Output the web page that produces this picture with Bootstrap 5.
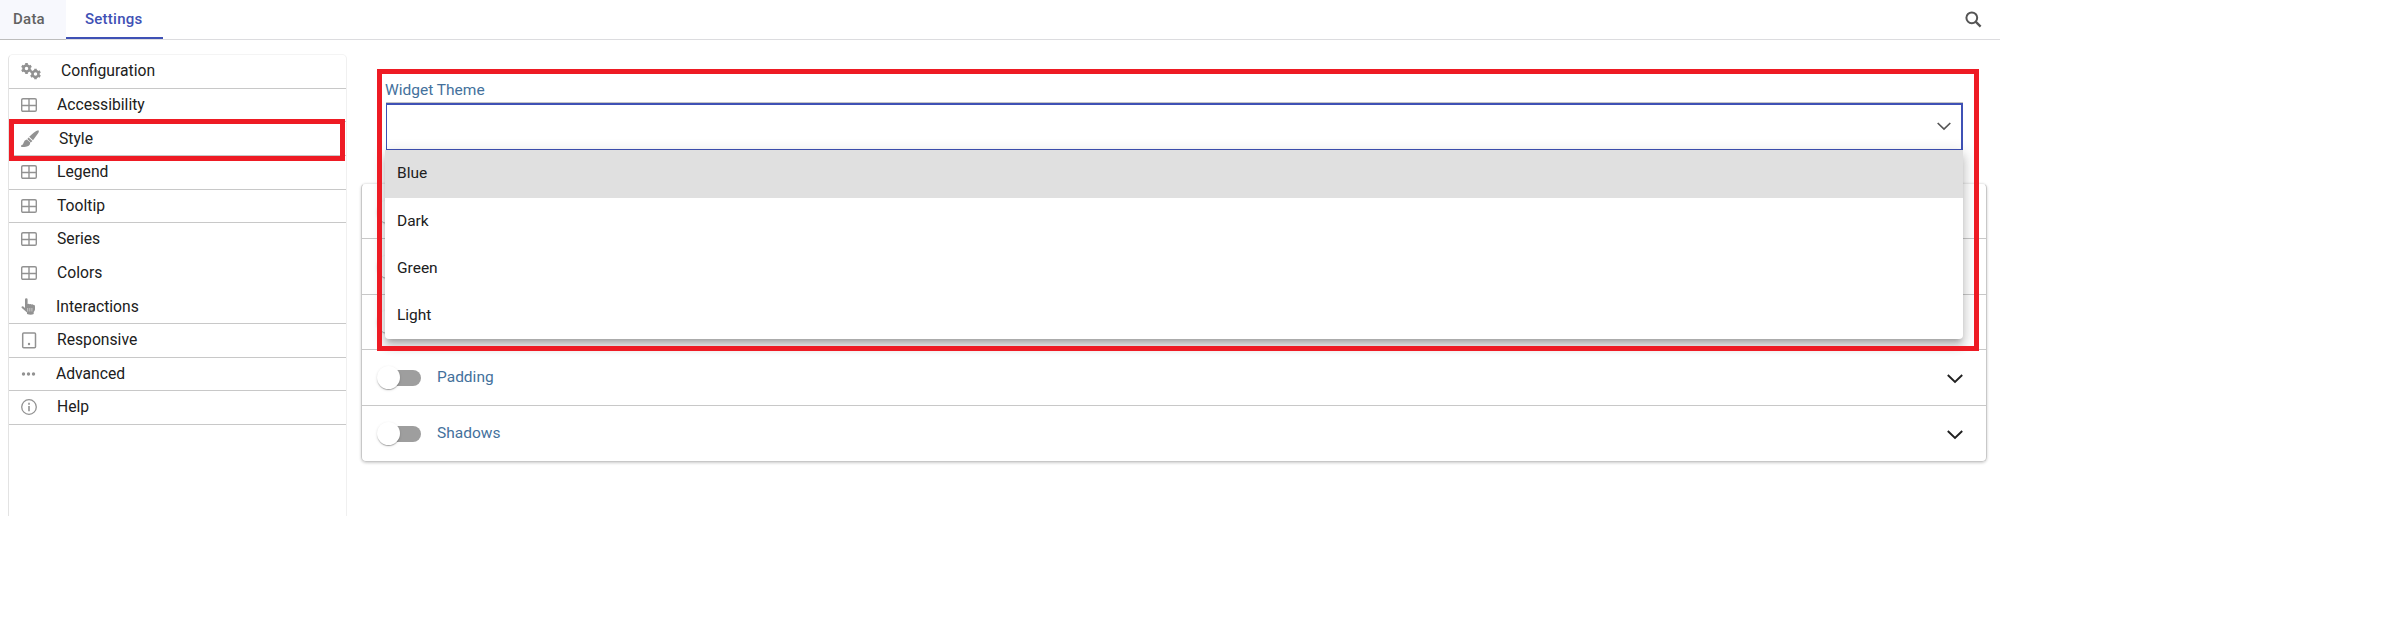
<!DOCTYPE html>
<html lang="en">
<head>
<meta charset="utf-8">
<title>Widget settings</title>
<link href="https://cdn.jsdelivr.net/npm/bootstrap@5.3.0/dist/css/bootstrap.min.css" rel="stylesheet">
<style>
body{font-family:Roboto,sans-serif;font-size:15.5px;line-height:20px;color:#202020;background:#fff}
.app{width:2000px}
.tabbar{height:40px;border-bottom:1px solid #dcdcdf}
.tabbar .tab{height:40px;font-weight:500;font-size:15px;line-height:38px;letter-spacing:.25px}
.tab-data{width:66px;padding-left:13px;background:#f7f8fd;color:#626262;border-bottom:1px solid #bdbdbd}
.tab-set{width:97px;padding-left:19px;color:#3f51b5;border-bottom:1px solid #dcdcdf;box-shadow:inset 0 -2px 0 #3f51b5}
.side{width:339px;height:462px;margin:14.2px 0 0 8px;border-left:1px solid #e3e3e3;border-right:1px solid #f0f0f0;border-top:1px solid #f4f4f4;border-radius:5px 5px 0 0;position:relative}
.side .item{height:33.6px;border-bottom:1px solid #c8c8c8;padding-left:12px;gap:20px;font-size:15.7px}
.side .item.plain{border-bottom-color:transparent}
.side .item svg{flex:none;color:#929292}
.mark-red{position:absolute;border:5px solid #ee1b24;pointer-events:none}
.mark-style{left:0;top:63.8px;width:336px;height:42px}
.mark-theme{left:-9px;top:-11px;width:1602px;height:282px;z-index:3}
.main-col{width:1626px;margin-left:14px}
.field{margin:40px 0 0 25px;width:1577px;position:relative}
.lbl{color:#44719c;line-height:20px}
.field .lbl{margin-left:-1px}
.sel{height:47px;margin-top:3px;border:1px solid #3f51b5;border-top-width:2px;border-right-width:2px;box-shadow:0 -1px 0 #c4c4c4;padding:0 10px 2px 0;color:#555}
.opts{position:absolute;top:70px;left:-1px;width:1578px;height:189px;background:#fff;border-radius:0 0 4px 4px;box-shadow:0 5px 5px -3px rgba(0,0,0,.2),0 8px 10px 1px rgba(0,0,0,.14),0 3px 14px 2px rgba(0,0,0,.12);z-index:2}
.opts div{height:47px;padding-left:12px;line-height:46px}
.opts .on{background:#e0e0e0;height:48px}
.panels{margin-top:33px;border:1px solid #c8c8c8;border-top-color:#ececec;border-radius:5px;box-shadow:0 1px 3px rgba(0,0,0,.2)}
.prow{height:55.4px;border-bottom:1px solid #c8c8c8;padding:0 23px 0 15px;gap:16px}
.prow:last-child{border-bottom:0}
.prow>svg{margin-top:3px}
.sw{width:44px;height:23px;position:relative;flex:none}
.sw::before{content:"";position:absolute;left:5px;right:0;top:4px;height:16px;border-radius:8px;background:#9e9e9e}
.sw::after{content:"";position:absolute;left:0;top:0;width:23px;height:23px;border-radius:50%;background:#fff;box-shadow:0 2px 1px -1px rgba(0,0,0,.2),0 1px 1px rgba(0,0,0,.14),0 1px 3px rgba(0,0,0,.12)}
.find{margin:11px 18px 0 0}
</style>
<script src="https://cdn.jsdelivr.net/npm/bootstrap@5.3.0/dist/js/bootstrap.bundle.min.js"></script>
</head>
<body>
<svg class="d-none">
<symbol id="grid" viewBox="0 0 16 14"><path d="M2 .7h12q1.300 0 1.300 1.300v10q0 1.300-1.300 1.300H2Q.7 13.300.7 12V2Q.7.7 2 .7zM8 .7v12.600M.7 7.500h14.600" fill="none" stroke="currentColor" stroke-width="1.400"/></symbol>
<symbol id="chev" viewBox="0 0 16 10"><path d="M.8 1l7.200 7 7.200-7" fill="none" stroke="currentColor" stroke-width="1.900"/></symbol>
<symbol id="gear" viewBox="-5.500 -5.500 11 11"><circle r="3" fill="none" stroke="currentColor" stroke-width="2.500"/><path d="M0-5.400v2M0 3.400v2M-4.700-2.700l1.700 1M3 1.700l1.700 1M-4.700 2.700l1.700-1M3-1.700l1.700-1" stroke="currentColor" stroke-width="2.600"/></symbol>
</svg>
<div class="app">
<nav class="tabbar d-flex">
<div class="tab tab-data">Data</div><div class="tab tab-set">Settings</div>
<svg class="find ms-auto" width="17" height="17" viewBox="0 0 17 17" fill="none" stroke="#555"><circle cx="6.800" cy="6.800" r="5.400" stroke-width="2"/><path d="M10.600 10.600l5 5" stroke-width="2.300"/></svg>
</nav>
<div class="d-flex align-items-start">
<aside class="side">
<div class="item d-flex align-items-center"><svg width="20" height="17"><use href="#gear" x="0" y="0" width="11" height="11"/><use href="#gear" x="9" y="5.500" width="11" height="11"/></svg><span>Configuration</span></div>
<div class="item d-flex align-items-center"><svg width="16" height="14"><use href="#grid"/></svg><span>Accessibility</span></div>
<div class="item d-flex align-items-center"><svg width="18" height="17" viewBox="0 0 18 17" fill="currentColor"><path d="M17.300.2q1.200 1-.2 3.100L12 10.200l-3.800-3.400Q13.300 1.400 17.300.2zM7.600 7.500l3.800 3.400-1.600 1.500-3.500-3.300z"/><path d="M5.800 9.400l3.500 3.200q-.3 4.300-5.800 4.300H.2v-1.600q2.100-.3 2.500-2.800.6-2.500 3.100-3.100z"/></svg><span>Style</span></div>
<div class="item d-flex align-items-center"><svg width="16" height="14"><use href="#grid"/></svg><span>Legend</span></div>
<div class="item d-flex align-items-center"><svg width="16" height="14"><use href="#grid"/></svg><span>Tooltip</span></div>
<div class="item plain d-flex align-items-center"><svg width="16" height="14"><use href="#grid"/></svg><span>Series</span></div>
<div class="item plain d-flex align-items-center"><svg width="16" height="14"><use href="#grid"/></svg><span>Colors</span></div>
<div class="item d-flex align-items-center"><svg width="15" height="17" viewBox="0 0 15 17"><path fill="currentColor" d="M4 1.500Q4 .3 5.300.3T6.600 1.500V6q1-.7 2 .2 1.100-.7 2 .3 1.100-.5 1.700.4 1.700-.3 1.700 1.500v3q-.4 1.700-1.300 2.500V16Q10 17.300 6 16V14.500L.6 9.800Q.2 8.200 2 8.300l2 1.600z"/><path d="M6.700 10v3.500M8.800 10v3.500M10.900 10v3.500" stroke="#fff" stroke-width=".5"/></svg><span>Interactions</span></div>
<div class="item d-flex align-items-center"><svg width="16" height="17" viewBox="0 0 16 17" fill="none" stroke="currentColor"><rect x="1.700" y="1" width="12.800" height="14.800" rx="1" stroke-width="1.500"/><circle cx="8" cy="12" r="1.200" fill="currentColor" stroke="none"/></svg><span>Responsive</span></div>
<div class="item d-flex align-items-center"><svg width="15" height="6" fill="currentColor"><circle cx="2.500" cy="3" r="1.700"/><circle cx="7.500" cy="3" r="1.700"/><circle cx="12.500" cy="3" r="1.700"/></svg><span>Advanced</span></div>
<div class="item d-flex align-items-center"><svg width="16" height="16" fill="none" stroke="currentColor"><circle cx="8" cy="8" r="7.300" stroke-width="1.300"/><path d="M8 7v5.200M8 3.700v2" stroke-width="1.600"/></svg><span>Help</span></div>
<div class="mark-red mark-style"></div>
</aside>
<main class="main-col">
<div class="field">
<div class="lbl">Widget Theme</div>
<div class="sel d-flex align-items-center justify-content-end" role="combobox"><svg width="14" height="9"><use href="#chev"/></svg></div>
<div class="opts"><div class="on">Blue</div><div>Dark</div><div>Green</div><div>Light</div></div>
<div class="mark-red mark-theme"></div>
</div>
<section class="panels">
<div class="prow d-flex align-items-center"><span class="sw"></span></div>
<div class="prow d-flex align-items-center"><span class="sw"></span></div>
<div class="prow d-flex align-items-center"><span class="sw"></span></div>
<div class="prow d-flex align-items-center"><span class="sw"></span><span class="lbl">Padding</span><svg class="ms-auto" width="16" height="10"><use href="#chev"/></svg></div>
<div class="prow d-flex align-items-center"><span class="sw"></span><span class="lbl">Shadows</span><svg class="ms-auto" width="16" height="10"><use href="#chev"/></svg></div>
</section>
</main>
</div>
</div>
</body>
</html>
